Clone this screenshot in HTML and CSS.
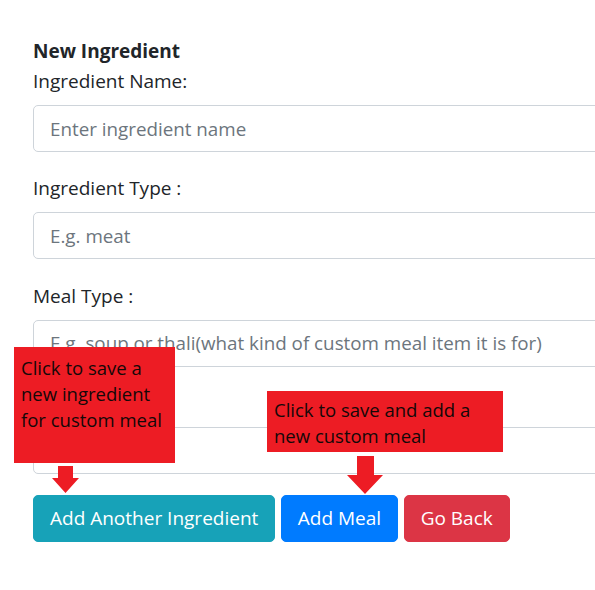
FILE: index.html
```html
<!DOCTYPE html>
<html lang="en">
<head>
<meta charset="utf-8">
<title>New Ingredient</title>
<link rel="stylesheet" href="styles.css">
</head>
<body>
<div class="page">
  <form class="form">
    <h5 class="title">New Ingredient</h5>
    <div class="group">
      <label class="label">Ingredient Name:</label>
      <input class="control" type="text" placeholder="Enter ingredient name">
    </div>
    <div class="group">
      <label class="label">Ingredient Type :</label>
      <input class="control" type="text" placeholder="E.g. meat">
    </div>
    <div class="group">
      <label class="label">Meal Type :</label>
      <input class="control" type="text" placeholder="E.g. soup or thali(what kind of custom meal item it is for)">
    </div>
    <div class="group">
      <label class="label label-hidden"></label>
      <input class="control" type="text" aria-label="Quantity">
    </div>
    <div class="actions">
      <button type="button" class="btn btn-info">Add Another Ingredient</button>
      <button type="button" class="btn btn-primary">Add Meal</button>
      <button type="button" class="btn btn-danger">Go Back</button>
    </div>
  </form>

  <div class="note note-one">Click to save a new ingredient for custom meal</div>
  <svg class="arrow arrow-one" width="28" height="28" viewBox="0 0 28 28"><polygon points="6,0 21,0 21,12 27,12 13.5,27 0,12 6,12" fill="#ed1c24"/></svg>

  <div class="note note-two">Click to save and add a new custom meal</div>
  <svg class="arrow arrow-two" width="37" height="38" viewBox="0 0 37 38"><polygon points="10,0 27,0 27,19 36,19 18,38 0,19 10,19" fill="#ed1c24"/></svg>
</div>
</body>
</html>
```
FILE: styles.css
```css
html, body {
  margin: 0;
  padding: 0;
  background: #fff;
}
.page {
  position: relative;
  width: 595px;
  height: 590px;
  overflow: hidden;
  font-family: "Open Sans", "Noto Sans", sans-serif;
  color: #212529;
}
.form {
  width: 640px;
  padding: 37px 0 0 33px;
}
.title {
  margin: 0;
  font-size: 19px;
  font-weight: 700;
  line-height: 28px;
}
.group {
  margin-bottom: 22.4px;
}
.label {
  display: block;
  font-size: 19px;
  line-height: 28px;
  margin: 2px 0 10px;
}
.label-hidden {
  height: 28px;
}
.control {
  display: block;
  box-sizing: border-box;
  width: 100%;
  height: 47px;
  padding: 0 16px;
  border: 1px solid #ced4da;
  border-radius: 5px;
  font-family: inherit;
  font-size: 18.8px;
  color: #495057;
  background: #fff;
  outline: none;
}
.control::placeholder {
  color: #6c757d;
  opacity: 1;
}
.actions {
  display: flex;
  gap: 5.5px;
  margin-top: -2px;
}
.btn {
  box-sizing: border-box;
  height: 47px;
  padding: 0 16px;
  border: 1px solid transparent;
  border-radius: 5px;
  font-family: inherit;
  font-size: 19px;
  color: #fff;
  cursor: pointer;
}
.btn-info { background: #17a2b8; border-color: #17a2b8; }
.btn-primary { background: #007bff; border-color: #007bff; }
.btn-danger { background: #dc3545; border-color: #dc3545; }

.note {
  position: absolute;
  box-sizing: border-box;
  background: #ed1c24;
  color: #140808;
  font-size: 18.5px;
  line-height: 26px;
}
.note-one {
  left: 14px;
  top: 347px;
  width: 161px;
  height: 116px;
  padding: 8px 4px 0 7px;
}
.note-two {
  left: 267px;
  top: 391px;
  width: 236px;
  height: 61px;
  padding: 6px 4px 0 7px;
}
.arrow {
  position: absolute;
  display: block;
}
.arrow-one { left: 52px; top: 466px; }
.arrow-two { left: 347px; top: 456px; }
```
